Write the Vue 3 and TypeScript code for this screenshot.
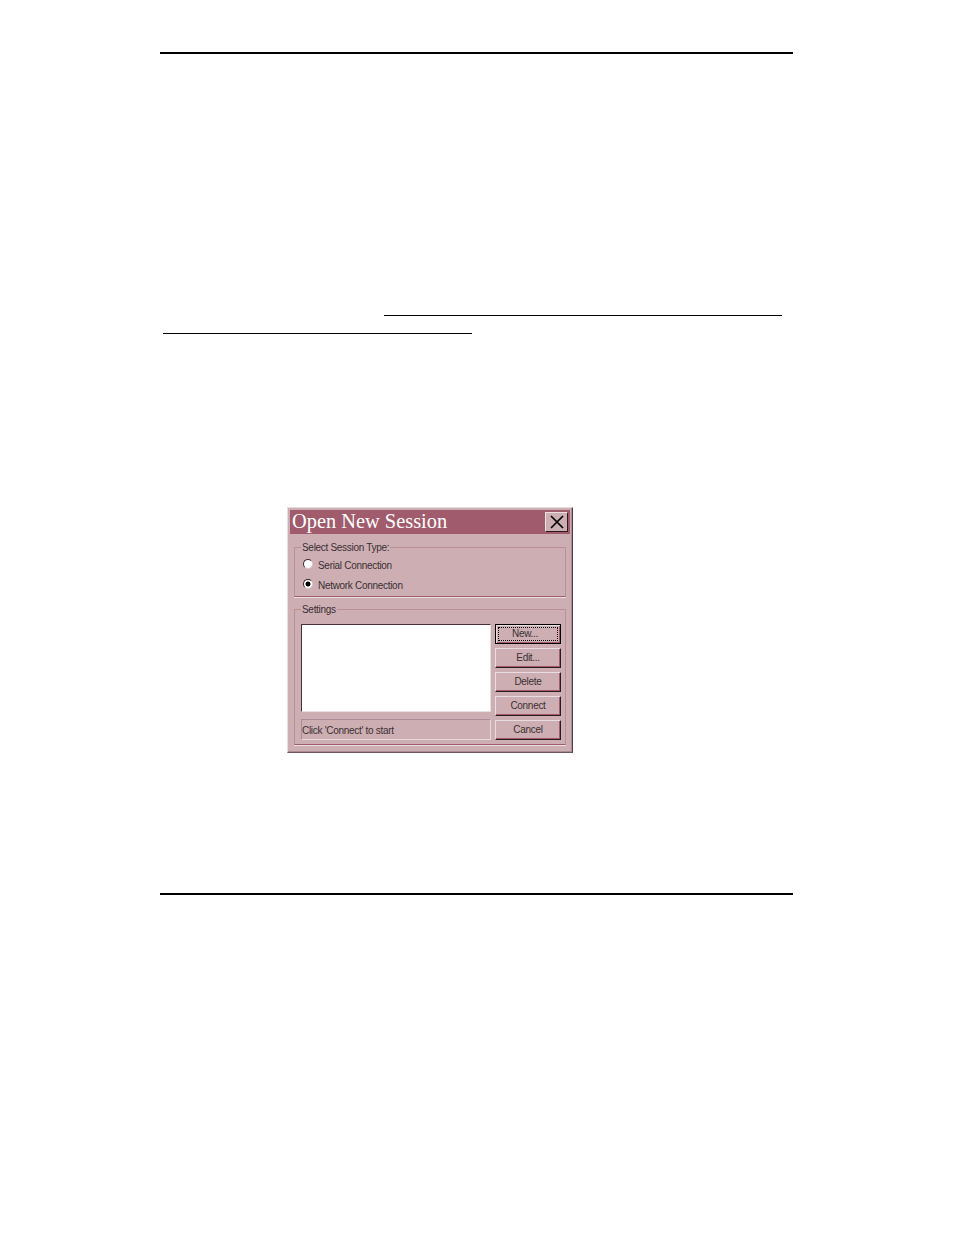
<script setup lang="ts">
const actions = [
  { label: 'New...', focused: true },
  { label: 'Edit...', focused: false },
  { label: 'Delete', focused: false },
  { label: 'Connect', focused: false },
  { label: 'Cancel', focused: false },
]
</script>

<template>
  <main class="page">
    <div class="rule"></div>
    <div class="link-line first"></div>
    <div class="link-line second"></div>

    <section class="dialog">
      <header class="titlebar">
        <h1>Open New Session</h1>
        <button class="close" type="button" aria-label="Close">
          <svg width="14" height="14" viewBox="0 0 14 14">
            <path d="M1 1 L13 13 M13 1 L1 13" stroke="#000" stroke-width="1.7" fill="none" />
          </svg>
        </button>
      </header>

      <fieldset class="group type-group">
        <legend>Select Session Type:</legend>
        <label class="radio-row">
          <span class="radio"></span>
          <span class="radio-label">Serial Connection</span>
        </label>
        <label class="radio-row">
          <span class="radio checked"></span>
          <span class="radio-label">Network Connection</span>
        </label>
      </fieldset>

      <fieldset class="group settings-group">
        <legend>Settings</legend>
        <div class="settings">
          <div class="left-col">
            <div class="list"></div>
            <div class="status">Click 'Connect' to start</div>
          </div>
          <div class="actions">
            <button
              v-for="a in actions"
              :key="a.label"
              type="button"
              class="btn"
              :class="{ focused: a.focused }"
            >
              <span>{{ a.label }}</span>
            </button>
          </div>
        </div>
      </fieldset>
    </section>

    <div class="rule bottom"></div>
  </main>
</template>

<style>
html, body {
  background: #fff;
}
</style>

<style scoped>
.page {
  box-sizing: border-box;
  width: 954px;
  height: 1235px;
  padding: 52px 161px 0 160px;
  font-family: "Liberation Sans", Arial, sans-serif;
  overflow: hidden;
}
.rule {
  height: 2px;
  background: #000;
}
.rule.bottom {
  margin-top: 140px;
}
.link-line {
  height: 1px;
  background: #000;
}
.link-line.first {
  margin: 261px 11px 0 224px;
}
.link-line.second {
  margin: 17px 321px 0 3px;
}
.dialog {
  box-sizing: border-box;
  width: 286px;
  height: 246px;
  margin: 173px 0 0 127px;
  padding: 2px 1px 0 2px;
  background: #cdaeb2;
  border-style: solid;
  border-width: 1px;
  border-color: #e6dde0 #5c3c48 #6e5460 #e6dde0;
  box-shadow: inset -1px -1px 0 #a98d96;
}
.titlebar {
  display: flex;
  align-items: center;
  justify-content: space-between;
  height: 24px;
  margin-right: 1px;
  padding: 0 2px 0 2px;
  background: #a05c6c;
}
.titlebar h1 {
  margin: 0 0 2px;
  font-family: "Liberation Serif", "Times New Roman", serif;
  font-size: 20.4px;
  font-weight: 400;
  color: #fff;
  white-space: nowrap;
}
.close {
  box-sizing: border-box;
  display: flex;
  align-items: center;
  justify-content: center;
  width: 23px;
  height: 20px;
  padding: 0;
  background: #cdaeb2;
  border-style: solid;
  border-width: 1px;
  border-color: #ecdfe2 #2c1a20 #2c1a20 #ecdfe2;
}
.group {
  box-sizing: border-box;
  min-width: 0;
  margin: 0 5px 0 4px;
  padding: 0;
  border: 1px solid #b98f9a;
  font-size: 10px;
  letter-spacing: -0.3px;
  color: #3a3034;
}
.group legend {
  margin-left: 6px;
  padding: 0 1px;
  line-height: 11px;
  white-space: nowrap;
}
.type-group {
  height: 55px;
  margin-top: 8px;
  border-bottom: 1px solid #a05c6c;
  box-shadow: 0 1px 0 #eadfe2;
}
.radio-row {
  display: flex;
  align-items: center;
  gap: 5px;
  height: 20px;
  padding-left: 8px;
}
.radio-row:first-of-type {
  margin-top: 1px;
}
.radio-label {
  padding-top: 3px;
}
.radio {
  box-sizing: border-box;
  display: block;
  width: 10px;
  height: 10px;
  border-radius: 50%;
  background: #fff;
  border: 1px solid;
  border-color: #3c2830 #d8c4c8 #d8c4c8 #3c2830;
}
.radio.checked {
  background: radial-gradient(circle, #000 0 2.2px, #fff 2.8px);
}
.settings-group {
  height: 141px;
  margin-top: 7px;
  border-bottom: 1px solid #a05c6c;
  box-shadow: 0 1px 0 #eadfe2;
}
.settings {
  display: grid;
  grid-template-columns: 190px 66px;
  column-gap: 4px;
  padding: 9px 0 0 6px;
}
.left-col {
  display: flex;
  flex-direction: column;
  gap: 7px;
}
.list {
  box-sizing: border-box;
  height: 88px;
  background: #fff;
  border-style: solid;
  border-width: 1px;
  border-color: #4a3038 #eadfe2 #eadfe2 #4a3038;
}
.status {
  box-sizing: border-box;
  height: 21px;
  line-height: 21px;
  border-style: solid;
  border-width: 1px;
  border-color: #a98d96 #e6d8dc #e6d8dc #a98d96;
  white-space: nowrap;
}
.actions {
  display: flex;
  flex-direction: column;
  gap: 4px;
}
.btn {
  box-sizing: border-box;
  display: flex;
  align-items: center;
  justify-content: center;
  height: 20px;
  padding: 0 0 2px;
  background: #cdaeb2;
  border-style: solid;
  border-width: 1px;
  border-color: #e8dce0 #2c1a20 #2c1a20 #e8dce0;
  box-shadow: inset -1px -1px 0 #a05c6c;
  font-family: inherit;
  font-size: 10px;
  letter-spacing: -0.3px;
  color: #3a3034;
}
.btn.focused {
  padding-bottom: 0;
  border-color: #000;
  box-shadow: inset 1px 1px 0 #e8dce0, inset -1px -1px 0 #a05c6c;
}
.btn.focused span {
  box-sizing: border-box;
  width: 58px;
  height: 12px;
  padding-right: 6px;
  line-height: 11px;
  outline: 1px dotted #000;
}
</style>
